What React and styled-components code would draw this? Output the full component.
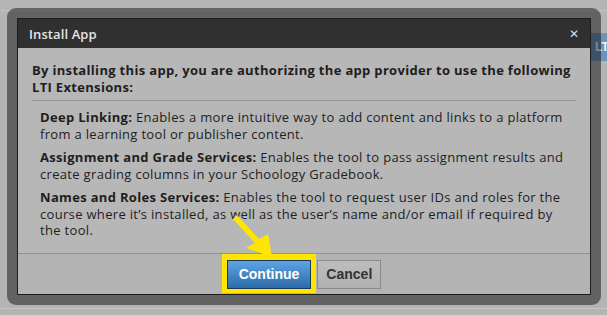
import React from "react";
import styled, { createGlobalStyle } from "styled-components";

const GlobalStyle = createGlobalStyle`
  html, body {
    margin: 0;
    padding: 0;
    background: #b4b4b4;
  }
  * {
    box-sizing: border-box;
  }
`;

const extensions = [
  {
    name: "Deep Linking:",
    text: "Enables a more intuitive way to add content and links to a platform from a learning tool or publisher content.",
  },
  {
    name: "Assignment and Grade Services:",
    text: "Enables the tool to pass assignment results and create grading columns in your Schoology Gradebook.",
  },
  {
    name: "Names and Roles Services:",
    text: "Enables the tool to request user IDs and roles for the course where it\u2019s installed, as well as the user\u2019s name and/or email if required by the tool.",
  },
];

const App = () => {
  return (
    <>
      <GlobalStyle />
      <Page>
        <TopRule />
        <Badge>LTI</Badge>
        <BottomRule />

        <Overlay>
          <Dialog>
            <Header>
              <Title>Install App</Title>
              <Close>&#x2715;</Close>
            </Header>
            <Body>
              <Intro>
                By installing this app, you are authorizing the app provider to
                use the following LTI Extensions:
              </Intro>
              <List>
                {extensions.map((ext) => (
                  <Item key={ext.name}>
                    <strong>{ext.name}</strong> {ext.text}
                  </Item>
                ))}
              </List>
            </Body>
            <Footer>
              <Button primary>Continue</Button>
              <Button>Cancel</Button>
            </Footer>
          </Dialog>
        </Overlay>

        <Arrow viewBox="0 0 607 315">
          <polygon points="237,215 259,239 268,234 272,257 246,248 255,243 233,219" />
        </Arrow>
      </Page>
    </>
  );
};

export default App;

const Page = styled.div`
  position: relative;
  width: 607px;
  height: 315px;
  overflow: hidden;
  background: #b4b4b4;
  font-family: "Open Sans", "DejaVu Sans", sans-serif;
`;

const TopRule = styled.div`
  margin-top: 10px;
  height: 1px;
  background: #c2c2c2;
`;

const BottomRule = styled.div`
  margin-top: 297px;
  height: 1px;
  background: #c4c4c4;
`;

const Badge = styled.div`
  position: absolute;
  top: 33px;
  left: 591px;
  width: 40px;
  height: 28px;
  padding-left: 4px;
  background: #6d93bb;
  color: #eef3f8;
  font: bold 12px/28px "Liberation Sans", sans-serif;
`;

const Overlay = styled.div`
  position: absolute;
  left: 7px;
  top: 8px;
  width: 594px;
  height: 297px;
  padding: 10px;
  border-radius: 9px;
  background: rgba(0, 0, 0, 0.45);
`;

const Dialog = styled.div`
  display: flex;
  flex-direction: column;
  height: 100%;
  border: 1px solid #1c1c1c;
  background: #b7b7b7;
`;

const Header = styled.div`
  display: flex;
  align-items: center;
  justify-content: space-between;
  height: 29px;
  padding: 0 11px 0 11px;
  background: #303030;
`;

const Title = styled.span`
  color: #e4e4e4;
  font-size: 13px;
  font-weight: 600;
  letter-spacing: 0.1px;
`;

const Close = styled.span`
  color: #dcdcdc;
  font: bold 12px "DejaVu Sans", sans-serif;
`;

const Body = styled.div`
  flex: 1;
  padding: 14px 14px 0 14px;
  color: #1e1e1e;
  font-size: 13px;
  line-height: 16.5px;
  letter-spacing: 0.32px;
`;

const Intro = styled.p`
  margin: 0;
  padding-bottom: 5px;
  font-weight: 700;
  border-bottom: 1px solid #929292;
`;

const List = styled.div`
  padding: 8px 0 0 8px;
`;

const Item = styled.p`
  margin: 0 0 7px;

  strong {
    font-weight: 700;
  }
`;

const Footer = styled.div`
  display: flex;
  justify-content: center;
  align-items: center;
  gap: 6px;
  height: 41px;
  border-top: 1px solid #929292;
  background: #b3b3b3;
`;

const Button = styled.button`
  height: 29px;
  padding: 0 ${(p) => (p.primary ? "11px" : "8px")};
  border: 1px solid ${(p) => (p.primary ? "#183a5e" : "#8a8a8a")};
  background: ${(p) =>
    p.primary
      ? "linear-gradient(#5ea3e2, #2d6cab)"
      : "linear-gradient(#bdbdbd, #b1b1b1)"};
  color: ${(p) => (p.primary ? "#ffffff" : "#333333")};
  font: bold 14px "Liberation Sans", Arial, sans-serif;
  box-shadow: ${(p) => (p.primary ? "0 -1px 0 5px #ffe500" : "none")};
  cursor: pointer;
`;

const Arrow = styled.svg`
  position: absolute;
  left: 0;
  top: 0;
  width: 607px;
  height: 315px;
  pointer-events: none;
  fill: #ffe600;
`;
